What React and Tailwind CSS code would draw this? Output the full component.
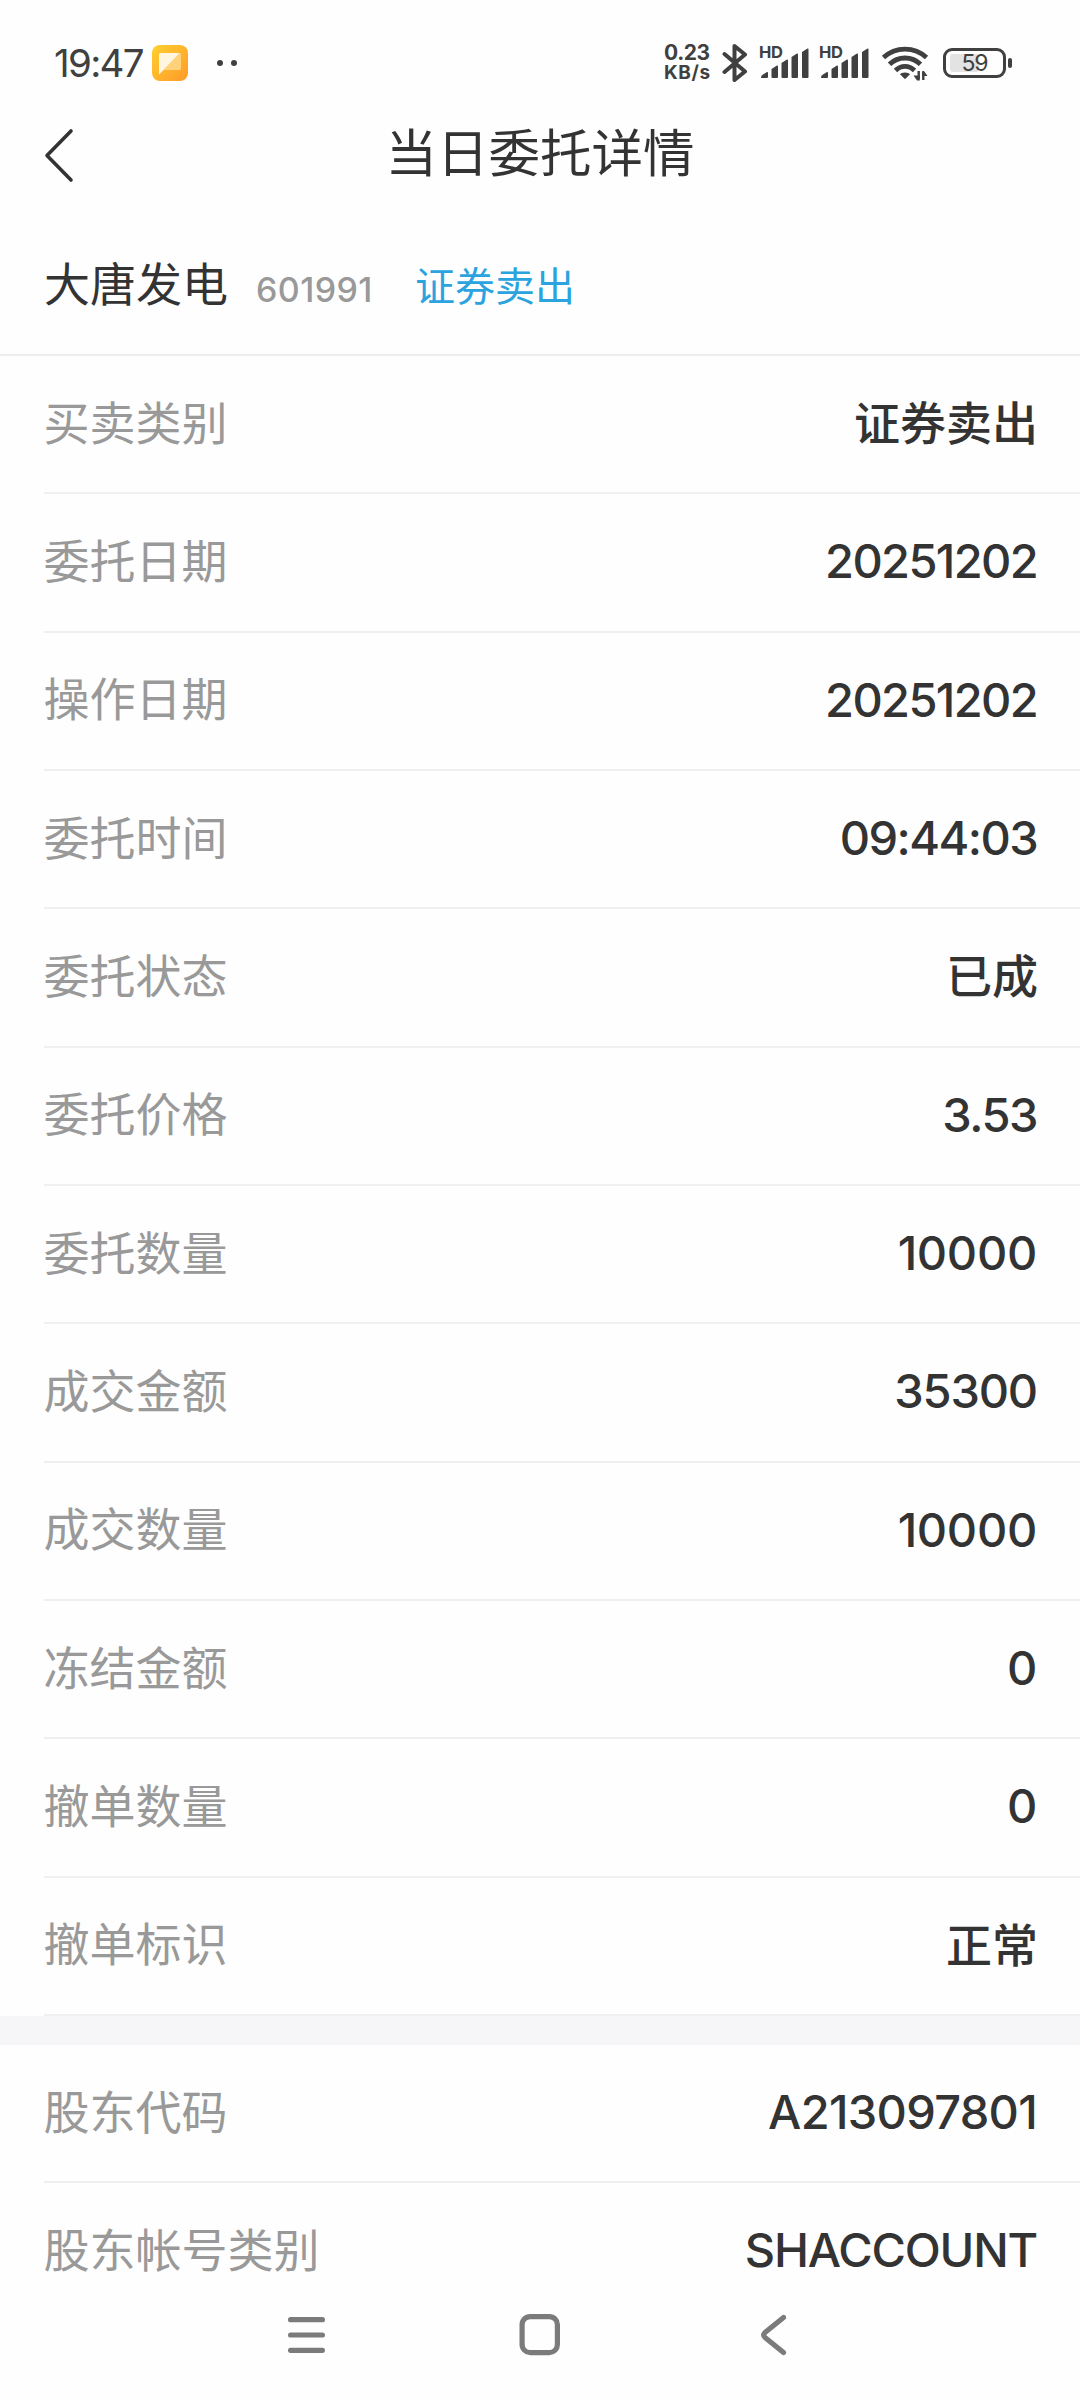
import React from 'react';

const CJK = "font-['Noto_Sans_CJK_SC',sans-serif]";
const LATIN = "font-['Inter','Noto_Sans_CJK_SC',sans-serif]";

const orderRows = [
  { label: '买卖类别', value: '证券卖出', cjk: true },
  { label: '委托日期', value: '20251202', tracking: 'tracking-[-1.65px]' },
  { label: '操作日期', value: '20251202', tracking: 'tracking-[-1.65px]' },
  { label: '委托时间', value: '09:44:03', tracking: 'tracking-[-1.6px]' },
  { label: '委托状态', value: '已成', cjk: true },
  { label: '委托价格', value: '3.53', tracking: 'tracking-[-1.5px]' },
  { label: '委托数量', value: '10000', tracking: 'tracking-[-0.3px]' },
  { label: '成交金额', value: '35300', tracking: 'tracking-[-1.2px]' },
  { label: '成交数量', value: '10000', tracking: 'tracking-[-0.3px]' },
  { label: '冻结金额', value: '0', tracking: 'tracking-[-0.3px]' },
  { label: '撤单数量', value: '0', tracking: 'tracking-[-0.3px]' },
  { label: '撤单标识', value: '正常', cjk: true },
];

const accountRows = [
  { label: '股东代码', value: 'A213097801', tracking: 'tracking-[-0.7px]' },
  { label: '股东帐号类别', value: 'SHACCOUNT', tracking: 'tracking-[-1.2px]' },
];

const NoteIcon = () => (
  <svg width="36" height="36" viewBox="0 0 36 36" className="ml-[9px]">
    <defs>
      <linearGradient id="note" x1="0" y1="0" x2="1" y2="1">
        <stop offset="0" stopColor="#ffd02e" />
        <stop offset="1" stopColor="#ff9a2b" />
      </linearGradient>
    </defs>
    <rect width="36" height="36" rx="8" fill="url(#note)" />
    <path d="M9 8H27.500Q29 8 29 9.500V23.500Q29 25 27.500 25H12L7 29.500V10Q7 8 9 8Z" fill="#ffd27a" />
    <path d="M9 8H27.500L7 29.500V10Q7 8 9 8Z" fill="#fff6e2" />
  </svg>
);

const BluetoothIcon = () => (
  <svg width="26" height="40" viewBox="0 0 26 40" fill="none" stroke="#404040" strokeWidth="4" strokeLinejoin="round" strokeLinecap="round">
    <path d="M2.500 11L23 28.500L12.500 37V3L23 11.500L2.500 29" />
  </svg>
);

// Five growing bars with slanted tops, "HD" sits over the short ones
const Signal = () => (
  <div className="relative h-[34px] w-[51px]">
    <span className={`absolute top-0 left-0 text-[16.5px] leading-[13px] font-bold tracking-[-0.3px] ${LATIN}`}>HD</span>
    <svg width="51" height="34" viewBox="0 0 51 34" fill="#404040" className="absolute top-0 left-0">
      <path d="M2 31.500Q2 29.500 4 28.500L8 26Q9 25.500 9 27V31Q9 32 8 32H3Q2 32 2 31.500Z" />
      <path d="M12.500 23L18 19.500Q19 19 19 20.500V31Q19 32 18 32H13.500Q12.500 32 12.500 31Z" />
      <path d="M22.500 17L28 13.500Q29 13 29 14.500V31Q29 32 28 32H23.500Q22.500 32 22.500 31Z" />
      <path d="M32.500 11L38 7.500Q39 7 39 8.500V31Q39 32 38 32H33.500Q32.500 32 32.500 31Z" />
      <path d="M43 6L48.500 2.500Q49.500 2 49.500 3.500V31Q49.500 32 48.500 32H44Q43 32 43 31Z" />
    </svg>
  </div>
);

const WifiIcon = () => (
  <svg width="48" height="36" viewBox="0 0 48 36" fill="none" stroke="#404040" strokeWidth="4.8">
    <path d="M2.500 12.500C14.500 1.200 33.500 1.200 45.500 12.500" />
    <path d="M8.500 19.300C17 10.900 31 10.900 39.500 19.300" />
    <path d="M14.500 25.500C20 20 28 20 33.500 25.500" />
    <path d="M24 27.500C26.500 27.500 28 28.300 29 29.300L25 33.300Q24 34.300 23 33.300L19 29.300C20 28.300 21.500 27.500 24 27.500Z" fill="#404040" stroke="none" />
    <path d="M37.700 26V34M42.300 35V27" strokeWidth="2.400" />
    <path d="M38.800 35.500H36L32.500 30.500H38.800ZM41.200 26H43L46.500 31H41.200Z" fill="#404040" stroke="none" />
  </svg>
);

const Battery = () => (
  <div className="flex items-center">
    <div className="flex h-[30px] w-[63px] items-center rounded-[9px] border-[3px] border-[#404040] p-[4px]">
      <div className="relative flex h-[18px] w-full items-center justify-center">
        <div className="absolute inset-y-0 left-0 w-[59%] rounded-[3px] bg-[#e3e3e3]" />
        <span className={`relative text-[23px] leading-[18px] tracking-[-1px] ${LATIN}`}>59</span>
      </div>
    </div>
    <div className="ml-[2px] h-[10px] w-[4px] rounded-[2px] bg-[#404040]" />
  </div>
);

const StatusBar = () => (
  <div className="flex h-[110px] items-center pt-[16px] pr-[68px] pl-[54px] text-[#404040]">
    <span className={`w-[89px] text-[38.5px] leading-none tracking-[-1.7px] whitespace-nowrap ${LATIN}`}>19:47</span>
    <NoteIcon />
    <div className="ml-[29px] flex gap-[8px]">
      <div className="size-[6px] rounded-full bg-[#404040]" />
      <div className="size-[6px] rounded-full bg-[#404040]" />
    </div>
    <div className="ml-auto flex items-center">
      <div className={`w-[49px] font-bold whitespace-nowrap ${LATIN}`}>
        <div className="text-[21px] leading-[20px] tracking-[-0.4px]">0.23</div>
        <div className="text-[19px] leading-[20px] tracking-[0.6px]">KB/s</div>
      </div>
      <div className="ml-[9px]"><BluetoothIcon /></div>
      <div className="ml-[11px] flex gap-[9px]">
        <Signal />
        <Signal />
      </div>
      <div className="mr-[14px] ml-[11px]"><WifiIcon /></div>
      <Battery />
    </div>
  </div>
);

const Header = () => (
  <div className="flex h-[90px] items-center px-[43px]">
    <svg width="32" height="56" viewBox="0 0 32 56" fill="none" stroke="#333" strokeWidth="3.6" strokeLinecap="round" strokeLinejoin="round">
      <path d="M28 4L4 28.500L28 53" />
    </svg>
    <h1 className={`flex-1 pr-[32px] pb-[10px] text-center text-[51.5px] leading-none ${CJK}`}>当日委托详情</h1>
  </div>
);

const Stock = () => (
  <div className="flex h-[156px] items-center border-b-2 border-[#ededed] pt-[12px] pl-[44px]">
    <span className={`pb-[4px] text-[46px] leading-none ${CJK}`}>大唐发电</span>
    <span className={`ml-[28px] w-[116px] pt-[13px] text-[34px] leading-none font-medium tracking-[0.4px] text-[#999] ${LATIN}`}>601991</span>
    <span className={`ml-[43px] pt-[2px] text-[40px] leading-none text-[#2ba3de] ${CJK}`}>证券卖出</span>
  </div>
);

const Row = ({ row }) => (
  <div className="ml-[43.500px] flex h-[138.340px] items-center justify-between border-b-2 border-[#f0f0f0]">
    <span className={`pb-[9px] text-[46px] leading-none text-[#999] ${CJK}`}>{row.label}</span>
    {row.cjk ? (
      <span className={`pr-[42px] pb-[8px] text-[46px] leading-none font-medium ${CJK}`}>{row.value}</span>
    ) : (
      <span className={`pr-[43px] pb-[3px] text-[47px] leading-none font-medium ${LATIN} ${row.tracking}`}>{row.value}</span>
    )}
  </div>
);

const NavBar = () => (
  <div className="flex h-[112px] shrink-0 justify-center bg-[#fefefe] pt-[23px]">
    <svg width="505" height="48" viewBox="0 0 505 48" fill="none" stroke="#7b7b7b" strokeWidth="5.2" strokeLinecap="round" strokeLinejoin="round">
      <path d="M2.600 8.700H34.400M2.600 24H34.400M2.600 39.300H34.400" />
      <rect x="234.100" y="5.600" width="35.300" height="36" rx="8" />
      <path d="M495.500 6.500L477 21.500Q474.500 24 477 26.500L495.500 41.500" />
    </svg>
  </div>
);

export default function App() {
  return (
    <div className="flex h-[2400px] w-[1080px] flex-col overflow-hidden bg-[#fefefe] text-[#333]">
      <StatusBar />
      <Header />
      <Stock />
      <div className="min-h-0 flex-1 overflow-hidden">
        {orderRows.map((row) => (
          <Row key={row.label} row={row} />
        ))}
        <div className="h-[29px] bg-[#f6f5f7]" />
        {accountRows.map((row) => (
          <Row key={row.label} row={row} />
        ))}
      </div>
      <NavBar />
    </div>
  );
}
